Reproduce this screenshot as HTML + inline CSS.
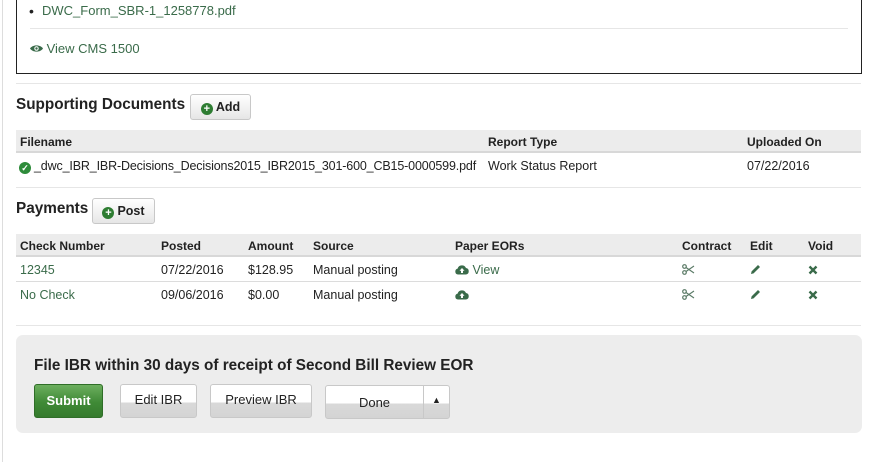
<!DOCTYPE html>
<html><head><style>
*{margin:0;padding:0;box-sizing:border-box}
body{width:876px;height:462px;background:#fff;font-family:"Liberation Sans",sans-serif;font-size:12.5px;color:#222;position:relative;overflow:hidden}
.a{position:absolute;white-space:nowrap}
.g{color:#3a6b4a}
.hr{position:absolute;height:1px;background:#e6e6e6}
.h{font-weight:bold;font-size:15.3px;color:#222}
.th{position:absolute;left:16px;width:845px;height:23px;background:#ececec;border-bottom:2px solid #d8d8d8}
.th span{position:absolute;top:5px;font-weight:bold;font-size:12px}
.row{position:absolute;left:16px;width:845px;height:25px;border-bottom:1px solid #dcdcdc}
.row span{position:absolute;top:6px}
.btn{position:absolute;border:1px solid #c8c8c8;border-radius:3px;background:linear-gradient(#fff 0,#fff 55%,#d9d9d9 55%,#d4d4d4 100%);text-align:center;font-size:13px;color:#222}
.sb{position:absolute;border:1px solid #c8c8c8;border-radius:3px;background:linear-gradient(#fff,#e6e6e6);font-weight:bold;font-size:12.5px;text-align:center}
.plus{display:inline-block;width:12px;height:12px;border-radius:50%;background:#2e7d32;color:#fff;font-size:11px;line-height:12px;text-align:center;vertical-align:-1px;margin-right:3px;font-weight:bold}
svg{vertical-align:-1px}
</style></head><body>
<div style="position:absolute;left:2px;top:0;width:1px;height:462px;background:#ddd"></div>
<div style="position:absolute;left:16px;top:-2px;width:846px;height:76px;border:1.5px solid #222;border-top:none"></div>
<div class="a" style="left:29px;top:3px;font-size:14px">•</div>
<div class="a g" style="left:42px;top:3px;font-size:13px">DWC_Form_SBR-1_1258778.pdf</div>
<div class="hr" style="left:30px;top:28px;width:818px"></div>
<div class="a g" style="left:30px;top:41px;font-size:13px"><svg width="13" height="9" viewBox="0 0 14 9" style="vertical-align:0"><path d="M0 4.5C3 0 11 0 14 4.5C11 9 3 9 0 4.5Z" fill="#3a6b4a"/><circle cx="7" cy="4.5" r="2.4" fill="#fff"/><circle cx="7" cy="4.5" r="1.3" fill="#3a6b4a"/></svg> View CMS 1500</div>
<div class="hr" style="left:16px;top:83px;width:845px"></div>
<div class="a h" style="left:16px;top:96px">Supporting Documents</div>
<div class="sb" style="left:190px;top:94px;width:61px;height:26px;line-height:24px"><span class="plus">+</span>Add</div>
<div class="th" style="top:130px"><span style="left:4px">Filename</span><span style="left:472px">Report Type</span><span style="left:731px">Uploaded On</span></div>
<div class="row" style="top:153px;border-bottom:none"><span style="left:3px;letter-spacing:-0.15px"><span class="plus" style="position:static;background:#2e8b3a;font-size:9px">✓</span>_dwc_IBR_IBR-Decisions_Decisions2015_IBR2015_301-600_CB15-0000599.pdf</span><span style="left:472px">Work Status Report</span><span style="left:731px">07/22/2016</span></div>
<div class="hr" style="left:16px;top:187px;width:845px"></div>
<div class="a h" style="left:16px;top:200px">Payments</div>
<div class="sb" style="left:92px;top:198px;width:63px;height:26px;line-height:24px"><span class="plus">+</span>Post</div>
<div class="th" style="top:234px"><span style="left:4px">Check Number</span><span style="left:145px">Posted</span><span style="left:232px">Amount</span><span style="left:297px">Source</span><span style="left:439px">Paper EORs</span><span style="left:666px">Contract</span><span style="left:734px">Edit</span><span style="left:792px">Void</span></div>
<div class="row" style="top:257px"><span class="g" style="left:4px">12345</span><span style="left:145px">07/22/2016</span><span style="left:232px">$128.95</span><span style="left:297px">Manual posting</span>
<span class="g" style="left:439px"><svg width="14" height="11" viewBox="0 0 14 11"><path d="M3 10.5A3 3 0 0 1 2.6 4.6A4.5 4.5 0 0 1 11 4A3.3 3.3 0 0 1 11 10.5Z" fill="#3a6b4a"/><path d="M7 4L4.5 6.8H6V9H8V6.8H9.5Z" fill="#fff"/></svg> View</span>
<span style="left:666px"><svg width="13" height="11" viewBox="0 0 13 11"><circle cx="2.5" cy="2.5" r="1.8" fill="none" stroke="#5a7a66" stroke-width="1.2"/><circle cx="2.5" cy="8.5" r="1.8" fill="none" stroke="#5a7a66" stroke-width="1.2"/><path d="M4 3.5L12 9M4 7.5L12 2" stroke="#5a7a66" stroke-width="1.1"/></svg></span>
<span style="left:734px"><svg width="11" height="11" viewBox="0 0 11 11"><path d="M1 10L1.6 7.4L8 1L10 3L3.6 9.4Z" fill="#3a6b4a"/></svg></span>
<span style="left:792px"><svg width="10" height="10" viewBox="0 0 10 10"><path d="M1.5 1.5L8.5 8.5M8.5 1.5L1.5 8.5" stroke="#3a6b4a" stroke-width="2.4"/></svg></span></div>
<div class="row" style="top:282px;border-bottom:none"><span class="g" style="left:4px">No Check</span><span style="left:145px">09/06/2016</span><span style="left:232px">$0.00</span><span style="left:297px">Manual posting</span>
<span class="g" style="left:439px"><svg width="14" height="11" viewBox="0 0 14 11"><path d="M3 10.5A3 3 0 0 1 2.6 4.6A4.5 4.5 0 0 1 11 4A3.3 3.3 0 0 1 11 10.5Z" fill="#3a6b4a"/><path d="M7 4L4.5 6.8H6V9H8V6.8H9.5Z" fill="#fff"/></svg></span>
<span style="left:666px"><svg width="13" height="11" viewBox="0 0 13 11"><circle cx="2.5" cy="2.5" r="1.8" fill="none" stroke="#5a7a66" stroke-width="1.2"/><circle cx="2.5" cy="8.5" r="1.8" fill="none" stroke="#5a7a66" stroke-width="1.2"/><path d="M4 3.5L12 9M4 7.5L12 2" stroke="#5a7a66" stroke-width="1.1"/></svg></span>
<span style="left:734px"><svg width="11" height="11" viewBox="0 0 11 11"><path d="M1 10L1.6 7.4L8 1L10 3L3.6 9.4Z" fill="#3a6b4a"/></svg></span>
<span style="left:792px"><svg width="10" height="10" viewBox="0 0 10 10"><path d="M1.5 1.5L8.5 8.5M8.5 1.5L1.5 8.5" stroke="#3a6b4a" stroke-width="2.4"/></svg></span></div>
<div class="hr" style="left:16px;top:325px;width:845px"></div>
<div style="position:absolute;left:16px;top:335px;width:846px;height:98px;background:#ededed;border-radius:7px"></div>
<div class="a h" style="left:34px;top:357px">File IBR within 30 days of receipt of Second Bill Review EOR</div>
<div class="a" style="left:34px;top:384px;width:69px;height:34px;border-radius:3px;background:linear-gradient(#6cae5e,#3f8a36 55%,#357a2d);border:1px solid #2f6e28;color:#fff;font-weight:bold;font-size:13px;text-align:center;line-height:32px">Submit</div>
<div class="btn" style="left:120px;top:384px;width:77px;height:34px;line-height:30px">Edit IBR</div>
<div class="btn" style="left:210px;top:384px;width:102px;height:34px;line-height:30px">Preview IBR</div>
<div class="btn" style="left:325px;top:385px;width:99px;height:34px;line-height:34px;border-radius:3px 0 0 3px">Done</div>
<div class="btn" style="left:423px;top:385px;width:27px;height:34px;line-height:28px;font-size:9px;border-radius:0 3px 3px 0">▲</div>
</body></html>
